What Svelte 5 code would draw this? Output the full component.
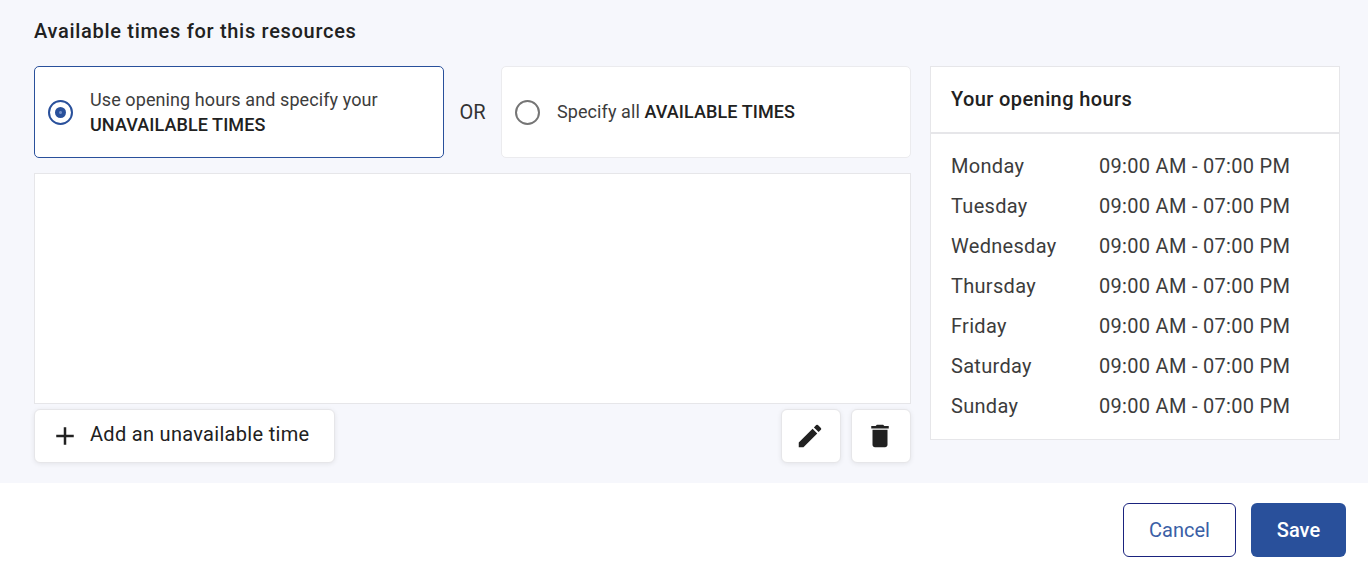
<script>
	const days = ['Monday', 'Tuesday', 'Wednesday', 'Thursday', 'Friday', 'Saturday', 'Sunday'];
</script>

<div class="page">
	<section class="panel">
		<h2 class="title">Available times for this resources</h2>
		<div class="columns">
			<div class="main">
				<div class="options">
					<div class="option selected">
						<span class="radio on"><span class="dot"></span></span>
						<span class="option-label">Use opening hours and specify your<br /><b>UNAVAILABLE TIMES</b></span>
					</div>
					<span class="or">OR</span>
					<div class="option">
						<span class="radio"></span>
						<span class="option-label single">Specify all <b>AVAILABLE TIMES</b></span>
					</div>
				</div>
				<div class="calendar"></div>
				<div class="actions">
					<button class="btn add">
						<svg width="30" height="30" viewBox="0 0 24 24"><path d="M19 13h-6v6h-2v-6H5v-2h6V5h2v6h6v2z" /></svg>
						<span>Add an unavailable time</span>
					</button>
					<div class="icon-btns">
						<button class="btn icon" aria-label="Edit">
							<svg width="30" height="30" viewBox="0 0 24 24"><path d="M3 17.25V21h3.75L17.81 9.94l-3.75-3.75L3 17.25zM20.71 7.04a1 1 0 0 0 0-1.41l-2.34-2.34a1 1 0 0 0-1.41 0l-1.83 1.83 3.75 3.75 1.83-1.83z" /></svg>
						</button>
						<button class="btn icon" aria-label="Delete">
							<svg width="30" height="30" viewBox="0 0 24 24"><path d="M6 19c0 1.1.9 2 2 2h8c1.1 0 2-.9 2-2V7H6v12zM19 4h-3.5l-1-1h-5l-1 1H5v2h14V4z" /></svg>
						</button>
					</div>
				</div>
			</div>
			<aside class="hours">
				<h3 class="hours-title">Your opening hours</h3>
				<div class="hours-list">
					{#each days as day}
						<div class="hours-row">
							<span class="day">{day}</span>
							<span>09:00 AM - 07:00 PM</span>
						</div>
					{/each}
				</div>
			</aside>
		</div>
	</section>
	<footer class="footer">
		<button class="foot-btn cancel">Cancel</button>
		<button class="foot-btn save">Save</button>
	</footer>
</div>

<style>
	:global(body) {
		margin: 0;
		background: #fff;
	}

	.page {
		font-family: Roboto, sans-serif;
		color: #212121;
		height: 566px;
		overflow: hidden;
	}

	.panel {
		height: 483px;
		box-sizing: border-box;
		background: #f6f7fc;
		padding: 20px 28px 0 34px;
	}

	.title {
		margin: 0 0 24px;
		font-size: 20px;
		line-height: 22px;
		font-weight: 500;
		letter-spacing: 0.7px;
	}

	.columns {
		display: flex;
		gap: 19px;
		align-items: flex-start;
	}

	.main {
		width: 877px;
	}

	.options {
		display: flex;
		align-items: center;
	}

	.option {
		width: 410px;
		height: 92px;
		box-sizing: border-box;
		background: #fff;
		border: 1px solid #ebebee;
		border-radius: 5px;
		padding: 0 13px;
		display: flex;
		align-items: center;
		gap: 17px;
		font-size: 18px;
		line-height: 25px;
		letter-spacing: 0.09px;
		color: #3c3c3c;
	}

	.option.selected {
		border-color: #29509b;
	}

	.option b {
		font-weight: 500;
		color: #212121;
	}

	.single {
		margin-top: -2px;
	}

	.or {
		width: 57px;
		text-align: center;
		font-size: 20px;
		color: #333;
	}

	.radio {
		width: 25px;
		height: 25px;
		box-sizing: border-box;
		border: 2px solid #757575;
		border-radius: 50%;
		display: flex;
		align-items: center;
		justify-content: center;
		flex-shrink: 0;
	}

	.radio.on {
		border: 2.5px solid #29509b;
	}

	.dot {
		width: 11px;
		height: 11px;
		border-radius: 50%;
		background: radial-gradient(circle, #6f8cc4 0 1px, #29509b 2px);
	}

	.calendar {
		margin-top: 15px;
		height: 231px;
		box-sizing: border-box;
		background: #fff;
		border: 1px solid #e6e6e9;
	}

	.actions {
		margin-top: 5px;
		display: flex;
		justify-content: space-between;
	}

	.icon-btns {
		display: flex;
		gap: 10px;
	}

	.btn {
		height: 54px;
		box-sizing: border-box;
		background: #fff;
		border: 1px solid #e6e6e9;
		border-radius: 6px;
		box-shadow: 0 1px 5px rgba(0, 0, 0, 0.08);
		color: #212121;
		font-family: inherit;
		display: flex;
		align-items: center;
		justify-content: center;
		padding: 0;
	}

	.btn svg {
		fill: currentColor;
		display: block;
	}

	.add {
		width: 301px;
		justify-content: flex-start;
		padding-left: 15px;
		gap: 10px;
		font-size: 20px;
		letter-spacing: 0.3px;
	}

	.add span {
		margin-top: -4px;
	}

	.icon {
		width: 60px;
		padding-right: 2px;
	}

	.hours {
		width: 410px;
		box-sizing: border-box;
		background: #fff;
		border: 1px solid #e6e6e9;
	}

	.hours-title {
		margin: 0;
		height: 67px;
		box-sizing: border-box;
		padding: 0 20px 2px;
		display: flex;
		align-items: center;
		font-size: 20px;
		font-weight: 500;
		letter-spacing: 0.4px;
		border-bottom: 2px solid #e6e6e9;
	}

	.hours-list {
		padding: 12px 20px 13px;
	}

	.hours-row {
		display: flex;
		height: 40px;
		align-items: center;
		font-size: 20px;
		letter-spacing: 0.3px;
		color: #3c3c3c;
	}

	.day {
		width: 148px;
	}

	.footer {
		display: flex;
		justify-content: flex-end;
		gap: 15px;
		padding: 20px 22px 0 0;
	}

	.foot-btn {
		height: 54px;
		box-sizing: border-box;
		border-radius: 6px;
		font-family: inherit;
		font-size: 20px;
		padding: 0;
	}

	.cancel {
		width: 113px;
		background: #fff;
		color: #3b5fa6;
		border: 1px solid #1a237e;
	}

	.save {
		width: 95px;
		background: #29509b;
		color: #fff;
		border: none;
		font-weight: 500;
	}
</style>
